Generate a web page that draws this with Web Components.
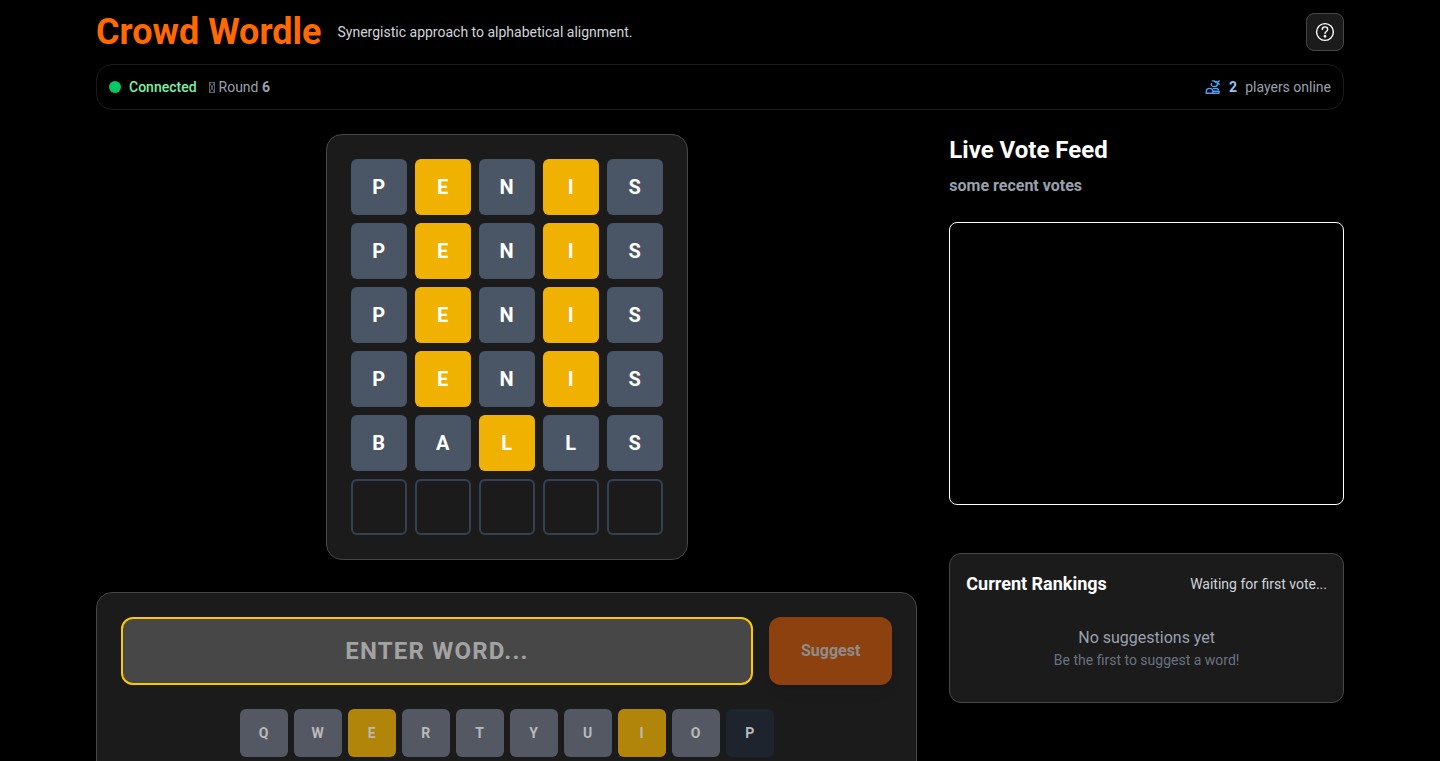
<!DOCTYPE html>
<html lang="en">
<head>
<meta charset="utf-8">
<meta name="viewport" content="width=device-width, initial-scale=1">
<title>Crowd Wordle</title>
<style>
body{margin:0;background:#000;color:#fff;font-family:Roboto,sans-serif;font-size:16px;line-height:24px}
</style>
</head>
<body>
<wordle-app></wordle-app>
<script>
const BASE = '*{box-sizing:border-box;margin:0}';
function define(name, render) {
  customElements.define(name, class extends HTMLElement {
    connectedCallback() {
      if (this.shadowRoot) return;
      this.attachShadow({ mode: 'open' }).innerHTML = render(this);
    }
  });
}

define('app-header', () => `<style>${BASE}
:host{display:flex;justify-content:space-between;align-items:center;height:64px}
.brand{display:flex;align-items:center;gap:16px}
h1{font-size:36px;line-height:40px;font-weight:700;color:#ff6900}
p{font-size:14px;line-height:20px;color:#d1d5dc}
button{width:38px;height:38px;padding:0;border:1px solid #474747;border-radius:8px;background:#1b1b1b;color:#fff;display:grid;place-items:center}
svg{display:block}
</style>
<div class="brand"><h1>Crowd Wordle</h1><p>Synergistic approach to alphabetical alignment.</p></div>
<button type="button" aria-label="How to play"><svg width="20" height="20" viewBox="0 0 20 20" fill="none" stroke="currentColor" stroke-width="1.4" stroke-linecap="round" stroke-linejoin="round"><circle cx="10" cy="10" r="8.4"/><path d="M7.3 7.4C7.3 5.8 8.5 4.9 10 4.9s2.7 1 2.7 2.5c0 2-2.7 2.1-2.7 4.1"/><circle cx="10" cy="14.3" r=".7" fill="currentColor"/></svg></button>`);

define('status-bar', () => `<style>${BASE}
:host{box-sizing:border-box;display:flex;justify-content:space-between;align-items:center;padding:12px;border:1px solid #1b1b1b;border-radius:16px;font-size:14px;line-height:20px;color:#99a1af}
div,span{display:flex;align-items:center}
.left{gap:12px}.state,.right{gap:8px}
.state{color:#7bf1a8;font-weight:500}
i{width:12px;height:12px;border-radius:50%;background:#00c966}
p{display:flex;align-items:center;gap:4px}
p b{font-weight:700}
.right b{color:#8ec5ff;font-weight:700}
</style>
<div class="left"><span class="state"><i></i>Connected</span><p><svg width="6" height="11" viewBox="0 0 6 11" fill="none" stroke="#99a1af" stroke-width=".6"><path d="M.5.5h5v10h-5zM.5.5l5 10M5.5.5l-5 10"/></svg><span>Round&nbsp;<b>6</b></span></p></div>
<div class="right"><svg width="16" height="16" viewBox="0 0 16 16" fill="none" stroke="#50a2ff" stroke-width="1.4"><path d="M6.8 1.9h3M9.6 2.2 11 3.7M6.9 6.8c-1-1-.8-2 .3-2.3M7.2 7.4h3c1.2 0 2-.6 2-1.7V4.2M10.8 2l1.6 1.6L14.6 1.4M12.6 3.8l2 2M1.3 14.3v-1.6c0-1.8 1.4-3.3 3.3-3.3s3.3 1.5 3.3 3.3v1.6zM8 9.4h3.4c1.4 0 2 .6 2 1.8M7.9 12.2h5.4c.6 0 1 .4 1 1s-.4 1.1-1 1.1H7.9"/></svg><b>2</b><span>players online</span></div>`);

define('letter-tile', el => `<style>
:host{box-sizing:border-box;display:grid;place-items:center;width:56px;height:56px;border-radius:6px;background:#4a5565;color:#fff;font-size:20px;line-height:28px;font-weight:700}
:host([state=present]){background:#f0b100}
:host([state=empty]){background:none;border:2px solid #364153}
</style><slot></slot>`);

define('guess-board', () => {
  const rows = ['PENIS', 'PENIS', 'PENIS', 'PENIS', 'BALLS'];
  const tiles = rows.map((word, r) => [...word].map((letter, c) => {
    const present = r < 4 ? (c === 1 || c === 3) : c === 2;
    return `<letter-tile${present ? ' state="present"' : ''}>${letter}</letter-tile>`;
  }).join('')).join('') + '<letter-tile state="empty"></letter-tile>'.repeat(5);
  return `<style>
:host{box-sizing:border-box;display:grid;grid-template-columns:repeat(5,56px);gap:8px;padding:24px;border:1px solid #474747;border-radius:16px;background:#1b1b1b}
</style>${tiles}`;
});

define('key-cap', () => `<style>${BASE}
:host{display:block}
button{width:48px;height:48px;padding:0;border:0;border-radius:6px;background:#545863;color:#bababb;font:700 14px/20px Roboto,sans-serif}
:host([state=present]) button{background:#b08509}
:host([state=absent]) button{background:#1d242e}
</style><button type="button"><slot></slot></button>`);

define('word-form', () => {
  const states = { E: 'present', I: 'present', P: 'absent' };
  return `<style>${BASE}
:host{box-sizing:border-box;display:flex;flex-direction:column;gap:24px;padding:24px;border:1px solid #474747;border-radius:16px;background:#1b1b1b}
form{display:flex;gap:16px}
input{flex:1;min-width:0;height:68px;padding:16px 24px;border:2px solid #fcc800;border-radius:12px;background:#474747;color:#fff;font:700 24px/32px Roboto,sans-serif;letter-spacing:.05em;text-align:center;text-transform:uppercase;outline:0}
input::placeholder{color:#a3a3a3;opacity:1}
.go{padding:0 32px;border:0;border-radius:12px;background:#8d410e;color:#8d8d8d;font:700 16px/24px Roboto,sans-serif;box-shadow:0 10px 15px -3px #0000000d,0 4px 6px -4px #0000000d}
.keys{display:flex;justify-content:center;gap:6px}
</style>
<form><input type="text" maxlength="5" placeholder="Enter word..." aria-label="Enter word"><button class="go" type="button">Suggest</button></form>
<div class="keys">${[...'QWERTYUIOP'].map(k => `<key-cap${states[k] ? ` state="${states[k]}"` : ''}>${k}</key-cap>`).join('')}</div>`;
});

define('vote-feed', () => `<style>${BASE}
:host{display:block}
h2{font-size:24px;line-height:32px;font-weight:700}
h3{margin-top:8px;font-size:16px;line-height:24px;font-weight:700;color:#99a1af}
.feed{margin-top:24px;height:283px;border:1px solid #fff;border-radius:8px}
</style><h2>Live Vote Feed</h2><h3>some recent votes</h3><div class="feed" role="log"></div>`);

define('current-rankings', () => `<style>${BASE}
:host{box-sizing:border-box;display:block;padding:16px;border:1px solid #474747;border-radius:12px;background:#1b1b1b}
header{display:flex;justify-content:space-between;align-items:center}
h2{font-size:18px;line-height:28px;font-weight:700}
header p{font-size:14px;line-height:20px;color:#d1d5dc}
.empty{padding:28px 0 16px;text-align:center;color:#99a1af}
.empty p+p{font-size:14px;line-height:20px;color:#6a7282}
</style><header><h2>Current Rankings</h2><p>Waiting for first vote...</p></header>
<div class="empty"><p>No suggestions yet</p><p>Be the first to suggest a word!</p></div>`);

define('wordle-app', () => `<style>${BASE}
:host{box-sizing:border-box;display:block;max-width:1280px;margin:0 auto;padding:0 16px}
main{display:grid;grid-template-columns:repeat(3,minmax(0,1fr));gap:32px;margin-top:24px}
.play{grid-column:span 2;display:flex;flex-direction:column;gap:32px}
guess-board{align-self:center}
aside{display:flex;flex-direction:column;gap:48px}
</style>
<app-header></app-header><status-bar></status-bar>
<main><section class="play"><guess-board></guess-board><word-form></word-form></section>
<aside><vote-feed></vote-feed><current-rankings></current-rankings></aside></main>`);
</script>
</body>
</html>
